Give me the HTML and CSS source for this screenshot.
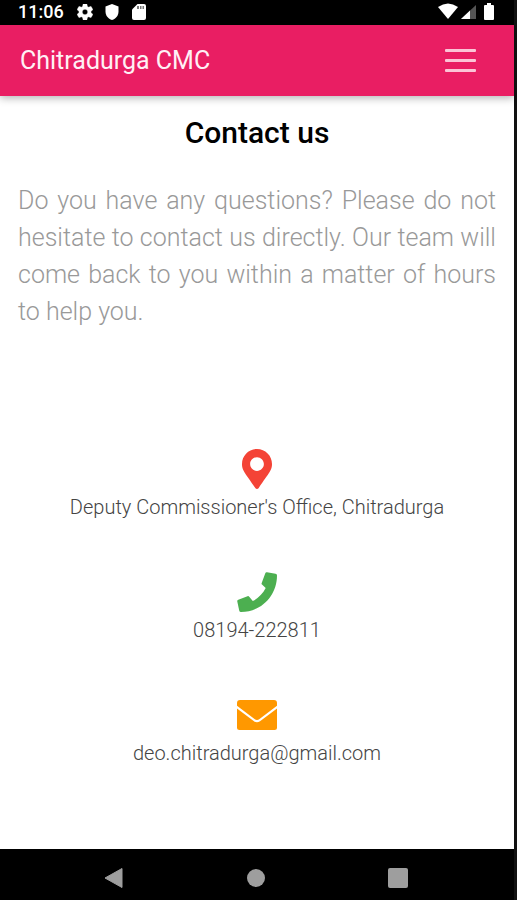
FILE: index.html
```html
<!DOCTYPE html>
<html lang="en">
<head>
<meta charset="utf-8">
<meta name="viewport" content="width=device-width, initial-scale=1">
<title>Chitradurga CMC</title>
<link rel="stylesheet" href="styles.css">
</head>
<body>
<div class="screen">
  <div class="status-bar">
    <div class="status-group">
      <span class="clock">11:06</span>
      <svg class="status-icon" viewBox="2 2 20 20" aria-hidden="true"><path fill="currentColor" stroke="currentColor" stroke-width=".6" d="M19.43 12.98c.04-.32.07-.64.07-.98s-.03-.66-.07-.98l2.11-1.65c.19-.15.24-.42.12-.64l-2-3.46c-.12-.22-.39-.3-.61-.22l-2.49 1c-.52-.4-1.08-.73-1.69-.98l-.38-2.65C14.46 2.18 14.25 2 14 2h-4c-.25 0-.46.18-.49.42l-.38 2.65c-.61.25-1.17.59-1.69.98l-2.49-1c-.23-.09-.49 0-.61.22l-2 3.46c-.13.22-.07.49.12.64l2.11 1.65c-.04.32-.07.65-.07.98s.03.66.07.98l-2.11 1.65c-.19.15-.24.42-.12.64l2 3.46c.12.22.39.3.61.22l2.49-1c.52.4 1.08.73 1.69.98l.38 2.65c.03.24.24.42.49.42h4c.25 0 .46-.18.49-.42l.38-2.65c.61-.25 1.17-.59 1.69-.98l2.49 1c.23.09.49 0 .61-.22l2-3.46c.12-.22.07-.49-.12-.64l-2.11-1.65zM12 15.5c-1.93 0-3.5-1.57-3.5-3.5s1.57-3.5 3.5-3.5 3.5 1.57 3.5 3.5-1.57 3.5-3.5 3.5z"/></svg>
      <svg class="status-icon" viewBox="0 0 16 16" aria-hidden="true"><path fill="currentColor" d="M8 0l6.500 2.500V7.500c0 4-2.500 7.300-6.500 8.500c-4-1.200-6.500-4.500-6.500-8.500V2.500z"/></svg>
      <svg class="status-icon" viewBox="0 0 16 16" aria-hidden="true"><path fill="currentColor" d="M6.500 0H13q2 0 2 2v12q0 2-2 2H3q-2 0-2-2V5.500z"/><path fill="#777" d="M6 2h2v3H6zM9 2h1.500v3H9zM11.500 2H13v3h-1.500z"/></svg>
    </div>
    <svg class="signal-icons" viewBox="0 0 58 18" aria-hidden="true">
      <path fill="#fff" d="M0 4Q10-3 20 4L10 16z"/>
      <path fill="#555" d="M23 16L38 2V16z"/>
      <path fill="#fff" d="M23 16L32 7.500V16z"/>
      <path fill="#fff" d="M49 0h4v2h2q1 0 1 1v13q0 1-1 1h-8q-1 0-1-1V3q0-1 1-1h2z"/>
    </svg>
  </div>
  <header class="app-bar">
    <a class="brand" href="#">Chitradurga CMC</a>
    <button class="menu-button" type="button" aria-label="Menu">
      <span class="menu-line"></span><span class="menu-line"></span><span class="menu-line"></span>
    </button>
  </header>
  <main class="content">
    <h1 class="title">Contact us</h1>
    <p class="intro">Do you have any questions? Please do not hesitate to contact us directly. Our team will come back to you within a matter of hours to help you.</p>
    <ul class="contacts">
      <li class="contact">
        <svg class="contact-icon address" viewBox="-64 0 512 512" aria-hidden="true"><path fill="currentColor" d="M172.268 501.670C26.970 291.031 0 269.413 0 192 0 85.961 85.961 0 192 0s192 85.961 192 192c0 77.413-26.970 99.031-172.268 309.670-9.535 13.774-29.930 13.773-39.464 0zM192 280c48.600 0 88-39.400 88-88s-39.400-88-88-88-88 39.400-88 88 39.400 88 88 88z"/></svg>
        <span class="contact-text">Deputy Commissioner's Office, Chitradurga</span>
      </li>
      <li class="contact">
        <svg class="contact-icon phone" viewBox="0 0 40 40" aria-hidden="true"><path fill="currentColor" d="M30 .3L38.500 1.700Q40 2 40 3.500C40 24 24 40 4 40Q2.500 40 2.200 38.500L.3 29.500Q0 28.200 1.300 27.700L10.500 24.200Q11.500 23.800 12.200 24.700L15.800 29C21 26.500 26 21.500 28.700 16L25 12.600Q24.300 12 24.700 11L28.300 1.200Q28.700 .1 30 .3z"/></svg>
        <span class="contact-text">08194-222811</span>
      </li>
      <li class="contact">
        <svg class="contact-icon mail" viewBox="0 0 40 40" aria-hidden="true"><path fill="currentColor" d="M3 5H37Q40 5 40 8V10.800L22.500 24Q20 26 17.500 24L0 10.800V8Q0 5 3 5zM0 13.500L17 26.200Q20 28.500 23 26.200L40 13.500V32.500Q40 35 37.500 35H2.500Q0 35 0 32.500z"/></svg>
        <span class="contact-text">deo.chitradurga@gmail.com</span>
      </li>
    </ul>
  </main>
  <nav class="system-nav" aria-label="System">
    <button class="nav-button" type="button" aria-label="Back"><svg class="nav-icon" viewBox="0 0 20 20"><path fill="currentColor" stroke="currentColor" stroke-linejoin="round" d="M1 10L18 0.500V19.500z"/></svg></button>
    <button class="nav-button" type="button" aria-label="Home"><svg class="nav-icon" viewBox="0 0 20 20"><circle fill="currentColor" cx="10" cy="10" r="9"/></svg></button>
    <button class="nav-button" type="button" aria-label="Recent apps"><svg class="nav-icon" viewBox="0 0 20 20"><rect fill="currentColor" width="20" height="20" rx="2"/></svg></button>
  </nav>
</div>
</body>
</html>
```
FILE: styles.css
```css
* {
  box-sizing: border-box;
}

body {
  margin: 0;
  background: #fff;
  color: #000;
  font-family: Roboto, "Liberation Sans", sans-serif;
}

button {
  padding: 0;
  border: 0;
  background: none;
  color: inherit;
}

.screen {
  display: flex;
  flex-direction: column;
  min-height: 100vh;
  border-right: 3px solid #111;
}

.status-bar {
  display: flex;
  justify-content: space-between;
  align-items: center;
  height: 25px;
  padding: 0 18px 2px;
  background: #000;
  color: #fff;
}

.status-group {
  display: flex;
  align-items: center;
  gap: 11px;
}

.clock {
  margin-right: 2px;
  font-size: 18px;
  font-weight: 500;
  line-height: 24px;
}

.status-icon {
  width: 16px;
  height: 16px;
}

.signal-icons {
  width: 58px;
  height: 18px;
}

.app-bar {
  display: flex;
  justify-content: space-between;
  align-items: center;
  height: 71px;
  padding: 0 38px 0 20px;
  background: #e91e63;
  box-shadow: 0 2px 8px rgba(0, 0, 0, 0.3);
}

.brand {
  color: #fff0f5;
  font-size: 25px;
  line-height: 36px;
  text-decoration: none;
}

.menu-button {
  display: flex;
  flex-direction: column;
  gap: 7px;
  width: 31px;
}

.menu-line {
  height: 3px;
  border-radius: 1px;
  background: #fbc4d6;
}

.content {
  flex: 1;
  padding: 19px 18px 0;
}

.title {
  margin: 0;
  font-size: 30px;
  font-weight: 500;
  line-height: 36px;
  text-align: center;
}

.intro {
  margin: 31px 0 0;
  color: #999;
  font-size: 25px;
  font-weight: 300;
  line-height: 37px;
  text-align: justify;
}

.contacts {
  display: grid;
  gap: 50px;
  margin: 119px 0 0;
  padding: 0;
  list-style: none;
}

.contact {
  display: flex;
  flex-direction: column;
  align-items: center;
  gap: 3px;
}

.contact-icon {
  width: 40px;
  height: 40px;
}

.address {
  color: #f44336;
}

.phone {
  color: #4caf50;
}

.mail {
  color: #ff9800;
}

.contact-text {
  color: #444;
  font-size: 20px;
  font-weight: 300;
  line-height: 30px;
}

.system-nav {
  display: flex;
  justify-content: center;
  gap: 122px;
  padding: 19px 2px 12px 0;
  background: #000;
  color: #9e9e9e;
}

.nav-button {
  width: 20px;
  height: 20px;
}

.nav-icon {
  display: block;
  width: 20px;
  height: 20px;
}
```
